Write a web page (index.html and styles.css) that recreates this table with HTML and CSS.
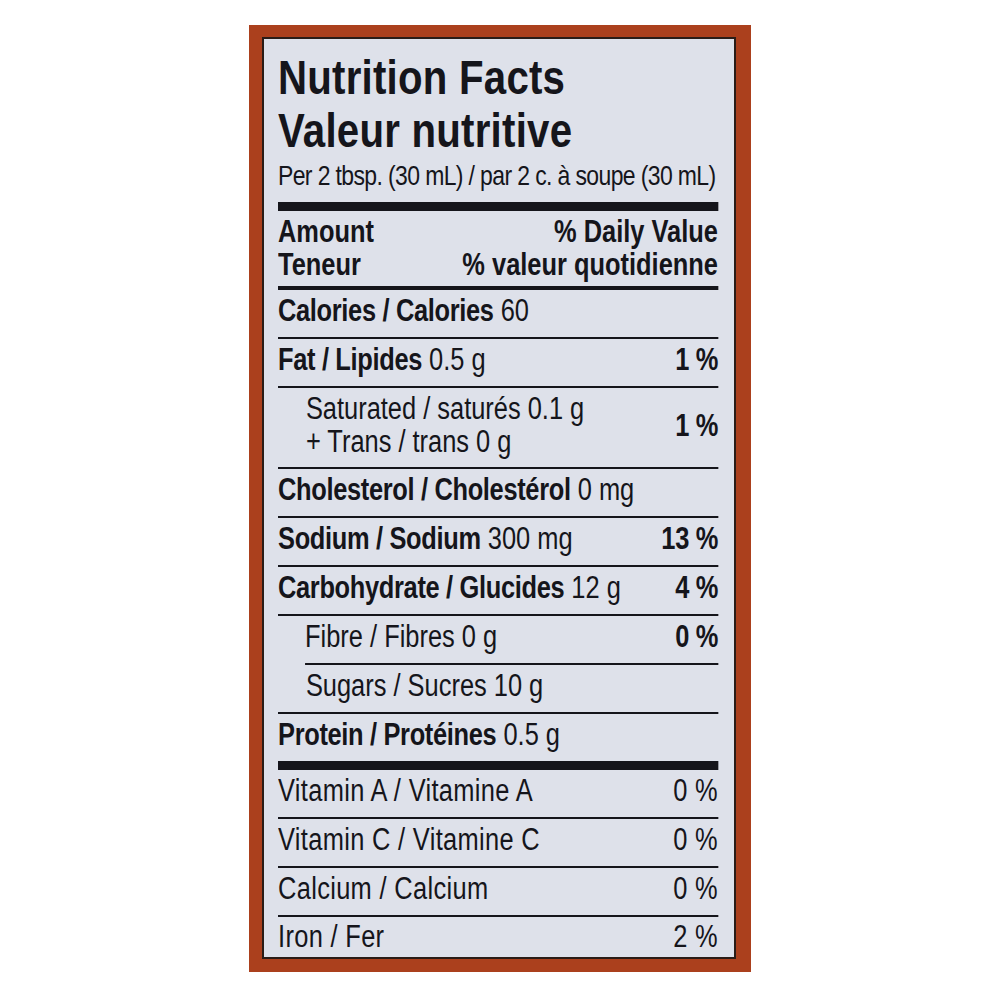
FILE: index.html
```html
<!DOCTYPE html>
<html lang="en">
<head>
<meta charset="utf-8">
<title>Nutrition Facts / Valeur nutritive</title>
<link rel="stylesheet" href="styles.css">
</head>
<body>
<div class="label">
  <div class="panel">
    <div class="condensed">
      <h1 class="title">Nutrition Facts<br>Valeur nutritive</h1>
      <p class="serving">Per 2 tbsp. (30 mL) / par 2 c. à soupe (30 mL)</p>
      <div class="rule-thick"></div>
      <div class="head">
        <div class="head-line"><span>Amount</span><span>% Daily Value</span></div>
        <div class="head-line"><span>Teneur</span><span>% valeur quotidienne</span></div>
      </div>
      <div class="row"><span><b>Calories / Calories</b> 60</span></div>
      <div class="row"><span><b>Fat / Lipides</b> 0.5 g</span><b>1 %</b></div>
      <div class="row row-two indent">
        <span class="stack"><span>Saturated / saturés 0.1 g</span><span>+ Trans / trans 0 g</span></span>
        <b>1 %</b>
      </div>
      <div class="row"><span><b>Cholesterol / Cholestérol</b> 0 mg</span></div>
      <div class="row"><span><b>Sodium / Sodium</b> 300 mg</span><b>13 %</b></div>
      <div class="row"><span><b>Carbohydrate / Glucides</b> 12 g</span><b>4 %</b></div>
      <div class="row row-sub"><span>Fibre / Fibres 0 g</span><b>0 %</b></div>
      <div class="row indent"><span>Sugars / Sucres 10 g</span></div>
      <div class="row no-rule"><span><b>Protein / Protéines</b> 0.5 g</span></div>
      <div class="rule-thick rule-mid"></div>
      <div class="row vit"><span>Vitamin A / Vitamine A</span><span>0 %</span></div>
      <div class="row vit"><span>Vitamin C / Vitamine C</span><span>0 %</span></div>
      <div class="row vit"><span>Calcium / Calcium</span><span>0 %</span></div>
      <div class="row vit row-last"><span>Iron / Fer</span><span>2 %</span></div>
    </div>
  </div>
</div>
</body>
</html>
```
FILE: styles.css
```css
html, body {
  margin: 0;
  padding: 0;
  background: #ffffff;
}

body {
  font-family: "Liberation Sans", Arial, sans-serif;
  color: #15151b;
}

.label {
  margin: 25px 0 0 249px;
  width: 502px;
  box-sizing: border-box;
  border-style: solid;
  border-color: #ab401d;
  border-width: 12px 15px 13px 13px;
}

.panel {
  background: #dee1ea;
  border: 2px solid #2a1c17;
  padding: 12px 16px 0 14px;
}

/* Condensed typeface look: lay out wide, then squeeze horizontally */
.condensed {
  width: calc(100% / 0.82);
  transform: scaleX(0.82);
  transform-origin: 0 0;
}

.title {
  margin: 0;
  font-size: 49px;
  line-height: 53px;
  font-weight: 700;
  letter-spacing: 0.3px;
}

.serving {
  margin: 4px 0 0;
  font-size: 28px;
  line-height: 30px;
  letter-spacing: -0.75px;
  white-space: nowrap;
}

.rule-thick {
  height: 9px;
  background: #15151b;
  margin-top: 11px;
}

.rule-mid {
  margin-top: 0;
}

.head {
  padding: 4px 0 5px;
  border-bottom: 4px solid #15151b;
  font-weight: 700;
  font-size: 31px;
  line-height: 33px;
}

.head-line {
  display: flex;
  justify-content: space-between;
}

.row {
  display: flex;
  justify-content: space-between;
  align-items: center;
  font-size: 31px;
  line-height: 42px;
  letter-spacing: 0;
  padding-bottom: 5px;
  border-bottom: 2px solid #15151b;
  white-space: nowrap;
}

.row b {
  font-weight: 700;
  letter-spacing: -0.4px;
}

.vit {
  letter-spacing: 0.4px;
}

.indent {
  padding-left: 34px;
}

.row-sub {
  margin-left: 33px;
}

.row-two {
  padding-top: 4px;
  padding-bottom: 9px;
  line-height: 33px;
}

.stack {
  display: flex;
  flex-direction: column;
}

.no-rule {
  border-bottom: none;
}

.row-last {
  border-bottom: none;
  line-height: 40px;
  padding-bottom: 0;
}
```
